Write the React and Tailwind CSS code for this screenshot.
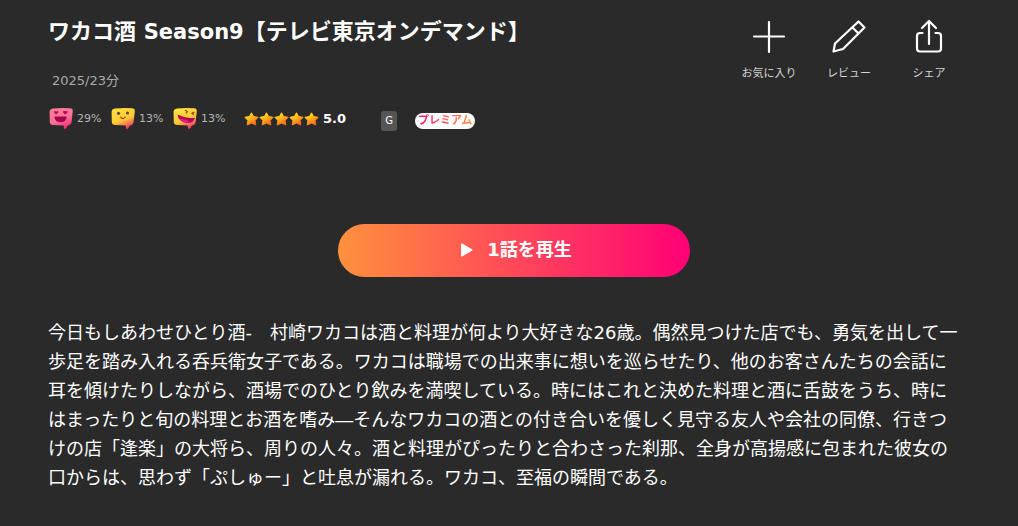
import React from "react";

function BubbleDefs({ id, from, mid, to }) {
  return (
    <defs>
      <linearGradient id={id} x1="0.25" y1="0" x2="0.7" y2="1">
        <stop offset="0" stopColor={from} />
        <stop offset="0.55" stopColor={mid} />
        <stop offset="0.95" stopColor={to} />
      </linearGradient>
    </defs>
  );
}

const BUBBLE =
  "M4 1.5 Q12 .6 21 1.2 Q24 1.4 23.8 4.2 L22.6 15 Q22.2 18 19.4 18.4 L18.8 18.6 Q18.2 21 15.4 22.6 L14.6 18.4 L4.2 18 Q1 17.8 .8 15 L.6 4.8 Q.8 2 4 1.5Z";

function LoveFace() {
  return (
    <svg viewBox="0 0 24 24" className="size-6" aria-hidden="true">
      <BubbleDefs id="love" from="#fb8097" mid="#fc6f95" to="#f02a6c" />
      <path d={BUBBLE} fill="url(#love)" />
      <path
        d="M7 7.600L5.200 5.800V4.200h1.600l.4.500.500-.500h1.500v1.600zM16.200 7.400l-2-1.700V4.100h1.600l.5.500.5-.5h1.600v1.600z"
        fill="#b30a5e"
      />
      <path d="M5.400 9.400h12.400Q17.200 15.200 11.600 15.300 6 15.200 5.400 9.400z" fill="#a4054f" />
    </svg>
  );
}

function SmileFace() {
  return (
    <svg viewBox="0 0 24 24" className="size-6" aria-hidden="true">
      <BubbleDefs id="smile" from="#ffdf3a" mid="#ffcb35" to="#f5316d" />
      <path d={BUBBLE} fill="url(#smile)" />
      <circle cx="7.500" cy="6.300" r="1.600" fill="#63474b" />
      <circle cx="16.500" cy="6" r="1.600" fill="#63474b" />
      <path d="M9.500 10.200q2.400 2.800 4.600-.1" fill="none" stroke="#8c4f1b" strokeWidth="1.200" strokeLinecap="round" />
    </svg>
  );
}

function LaughFace() {
  return (
    <svg viewBox="0 0 24 24" className="size-6" aria-hidden="true">
      <BubbleDefs id="laugh" from="#ffe63a" mid="#ffc43a" to="#f2356d" />
      <path d={BUBBLE} fill="url(#laugh)" />
      <path d="M12 3l2.400 1.800-1.600 1.600M21.400 5l-2.400 1.400 2 1.400" fill="none" stroke="#70452b" strokeWidth="1.100" />
      <path d="M4.400 7.400Q12 11.200 21.800 11 20.400 16.600 14 16 5.600 15 4.400 7.400z" fill="#b00459" />
      <path d="M6.800 12.400q5-1.200 10.400 2.800-6 1.600-10.400-2.800z" fill="#e6207c" />
    </svg>
  );
}

function Star() {
  return (
    <svg viewBox="0 0 15 14" className="h-[14px] w-[15px]" aria-hidden="true">
      <defs>
        <linearGradient id="star" x1="0.1" y1="0" x2="0.7" y2="1">
          <stop offset="0.3" stopColor="#ffcf1a" />
          <stop offset="1" stopColor="#ff5f1f" />
        </linearGradient>
      </defs>
      <path
        d="M7.500.8l2.100 3.700 4.500.8-3 3.200.7 4.500-4.300-1.900-4.300 1.900.7-4.500-3-3.200 4.500-.8z"
        fill="url(#star)"
        stroke="url(#star)"
        strokeWidth="1"
        strokeLinejoin="round"
      />
    </svg>
  );
}

function Action({ label, children }) {
  return (
    <button type="button" className="flex w-20 flex-col items-center gap-3">
      <svg
        viewBox="0 0 36 36"
        className="size-9"
        fill="none"
        stroke="#fff"
        strokeWidth="2.200"
        strokeLinecap="round"
        strokeLinejoin="round"
        aria-hidden="true"
      >
        {children}
      </svg>
      <span className="text-[11px] leading-4 whitespace-nowrap text-[#d6d6d6]">{label}</span>
    </button>
  );
}

const reactions = [
  { Face: LoveFace, value: "29%" },
  { Face: SmileFace, value: "13%" },
  { Face: LaughFace, value: "13%" },
];

export default function App() {
  return (
    <main className="min-h-screen bg-[#2a2a2a] pb-9 font-['DejaVu_Sans','Noto_Sans_CJK_JP',sans-serif] text-white">
      <header className="flex items-start justify-between pr-[49px] pl-12">
        <div className="pt-4">
          <h1 className="text-[22px] leading-8 font-bold">
            ワカコ酒 <span className="text-[21px]">Season9</span>【テレビ東京オンデマンド】
          </h1>
          <p className="mt-[25px] pl-1 text-[13px] leading-4 text-[#a9a9a9]">2025/23分</p>
          <div className="mt-[14px] flex h-8 items-center">
            <ul className="flex pl-px">
              {reactions.map(({ Face, value }, i) => (
                <li key={i} className="flex w-[62px] items-center gap-1">
                  <Face />
                  <span className="text-[11px] leading-4 text-[#b5b5b5]">{value}</span>
                </li>
              ))}
            </ul>
            <div className="ml-[9px] flex items-center">
              {[1, 2, 3, 4, 5].map((n) => (
                <Star key={n} />
              ))}
              <span className="ml-1 text-[13px] leading-4 font-bold">5.0</span>
            </div>
            <span className="mt-1 ml-[35px] flex h-5 w-4 items-center justify-center rounded-[3px] bg-[#555] text-[10px] leading-4">
              G
            </span>
            <span className="mt-1 ml-[18px] flex h-4 items-center rounded-full bg-white px-[3px] text-[11px] font-bold">
              <span className="bg-linear-to-r/srgb from-[#ff1271] to-[#ff9140] bg-clip-text leading-4 text-transparent">
                プレミアム
              </span>
            </span>
          </div>
        </div>
        <div className="flex pt-[18px]">
          <Action label="お気に入り">
            <path d="M18 4v30M3 18.500h30" />
          </Action>
          <Action label="レビュー">
            <path d="M27.500 3.500l6 6L12 31 2.500 33.500 4 25.500zM21.500 9.500l6 6" />
          </Action>
          <Action label="シェア">
            <path d="M18 26V3M11 10l7-7 7 7M11.500 15H9q-3 0-3 3v12.500q0 3 3 3h18q3 0 3-3V18q0-3-3-3h-2.500" />
          </Action>
        </div>
      </header>

      <div className="mt-[89px] flex justify-center pr-[38px] pl-12">
        <button
          type="button"
          className="flex h-[53px] w-full max-w-[352px] items-center justify-center gap-[14px] rounded-full bg-linear-to-r/srgb from-[#ff913d] to-[#ff0075] pb-0.5 pl-1 text-lg font-bold"
        >
          <svg viewBox="0 0 13 14" className="h-[14px] w-[13px]" fill="#fff" aria-hidden="true">
            <path d="M1 1.200Q1 0 2.200.600L12 6.200q1 .800 0 1.600L2.200 13.400Q1 14 1 12.800z" />
          </svg>
          1話を再生
        </button>
      </div>

      <p className="mt-[41px] pr-[54px] pl-12 text-[18px] leading-[29px]">
        今日もしあわせひとり酒-　村崎ワカコは酒と料理が何より大好きな26歳。偶然見つけた店でも、勇気を出して一歩足を踏み入れる呑兵衛女子である。ワカコは職場での出来事に想いを巡らせたり、他のお客さんたちの会話に耳を傾けたりしながら、酒場でのひとり飲みを満喫している。時にはこれと決めた料理と酒に舌鼓をうち、時にはまったりと旬の料理とお酒を嗜み―そんなワカコの酒との付き合いを優しく見守る友人や会社の同僚、行きつけの店「逢楽」の大将ら、周りの人々。酒と料理がぴったりと合わさった刹那、全身が高揚感に包まれた彼女の口からは、思わず「ぷしゅー」と吐息が漏れる。ワカコ、至福の瞬間である。
      </p>
    </main>
  );
}
